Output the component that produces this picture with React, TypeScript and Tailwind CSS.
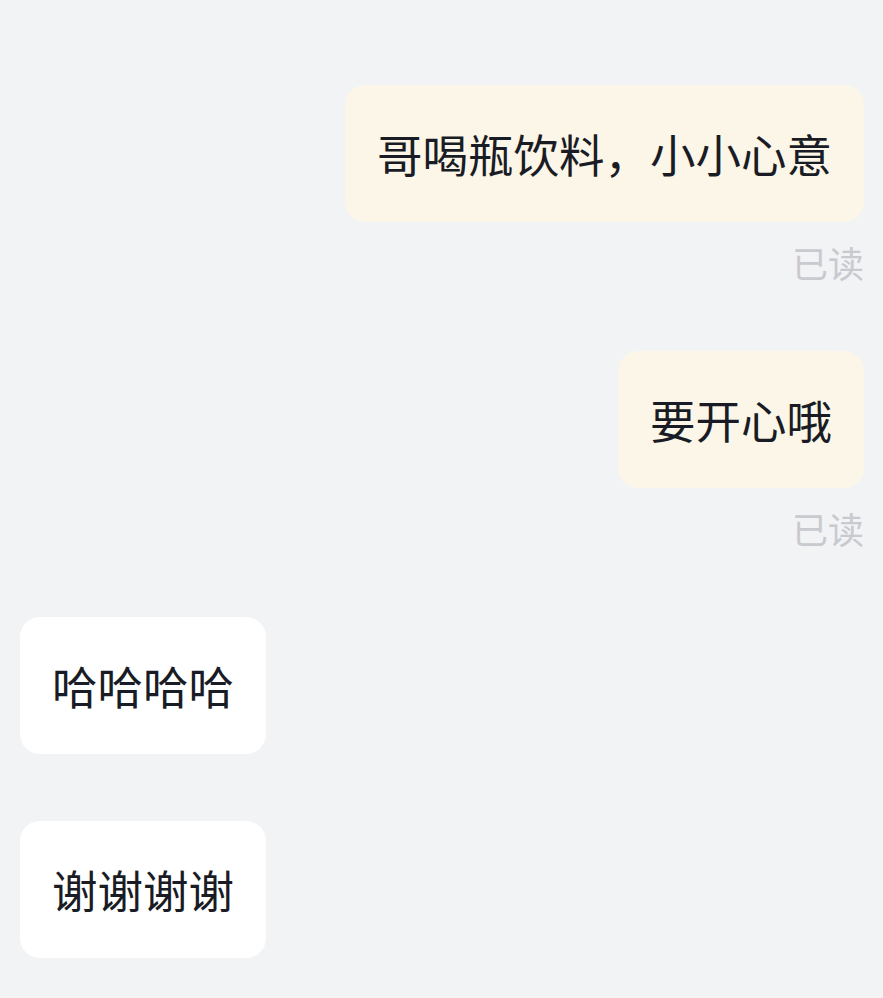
import React from 'react';

interface Message {
  text: string;
  mine: boolean;
  read?: boolean;
}

const messages: Message[] = [
  { text: '哥喝瓶饮料，小小心意', mine: true, read: true },
  { text: '要开心哦', mine: true, read: true },
  { text: '哈哈哈哈', mine: false },
  { text: '谢谢谢谢', mine: false },
];

const font = { fontFamily: '"Noto Sans CJK SC", "Noto Sans", sans-serif' };

const Bubble: React.FC<{ msg: Message }> = ({ msg }) => (
  <div className={`flex flex-col ${msg.mine ? 'items-end' : 'items-start'}`}>
    <div
      className={`rounded-[20px] px-8 py-8 text-[45.5px] leading-[73px] text-[#1a1c25] ${
        msg.mine ? 'bg-[#fcf6e8]' : 'bg-white'
      }`}
    >
      {msg.text}
    </div>
    {msg.read && (
      <div className="mt-[14px] text-[36px] leading-[52px] text-[#c8cacf]">已读</div>
    )}
  </div>
);

export default function App() {
  return (
    <div
      className="w-[883px] h-[998px] overflow-hidden bg-[#f2f3f5] pl-5 pr-[19px] pt-[85px]"
      style={font}
    >
      <div className="flex flex-col gap-[63px]">
        {messages.slice(0, 3).map((m, i) => (
          <Bubble key={i} msg={m} />
        ))}
      </div>
      <div className="mt-[67px]">
        <Bubble msg={messages[3]} />
      </div>
    </div>
  );
}
